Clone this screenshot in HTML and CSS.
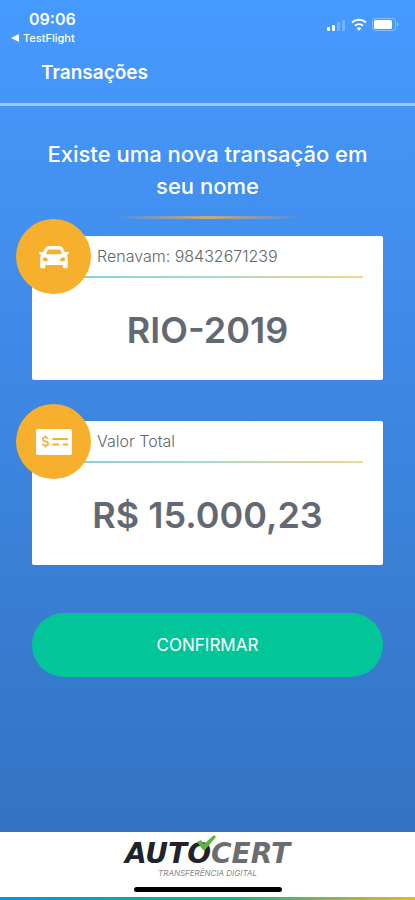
FILE: index.html
```html
<!DOCTYPE html>
<html lang="pt-BR">
<head>
    <meta charset="UTF-8">
    <meta name="viewport" content="width=device-width, initial-scale=1.0">
    <title>Transações</title>
    <link rel="stylesheet" href="styles.css">
</head>
<body>
    <header class="header">
        <div class="status-bar">
            <div class="status-left">
                <span class="time">09:06</span>
                <a class="back-link" href="#"><svg width="8" height="8" viewBox="0 0 8 8" aria-hidden="true"><path d="M8 0v8L0 4z" fill="#fff"/></svg>TestFlight</a>
            </div>
            <svg class="status-icons" width="72" height="16" viewBox="0 0 72 16" fill="#fff" aria-hidden="true">
                <rect x="0" y="11" width="3" height="4" rx="1"/>
                <rect x="5" y="9" width="3" height="6" rx="1"/>
                <rect x="10" y="6" width="3" height="9" rx="1" opacity=".25"/>
                <rect x="15" y="4" width="3" height="11" rx="1" opacity=".25"/>
                <g fill="none" stroke="#fff" stroke-width="2">
                    <path d="M25 6.500a10.500 10.500 0 0 1 14 0"/>
                    <path d="M28 9.800a6 6 0 0 1 8 0"/>
                </g>
                <path d="M32 14.800l-2.400-2.600a3.600 3.600 0 0 1 4.800 0z"/>
                <rect x="45.500" y="2.500" width="23" height="12" rx="3" fill="none" stroke="#fff" opacity=".35"/>
                <rect x="47" y="4" width="18" height="9" rx="1.500"/>
                <path d="M70 6.500c2 .6 2 3.400 0 4z" opacity=".4"/>
            </svg>
        </div>
        <h1>Transações</h1>
    </header>

    <main class="content">
        <h2>Existe uma nova transação em seu nome</h2>
        <div class="title-line"></div>

        <section class="card">
            <div class="card-icon">
                <svg width="30" height="24" viewBox="0 0 30 24" aria-hidden="true">
                    <path fill="#fff" fill-rule="evenodd" d="M10 1h10c2 0 3.500 1 4.200 2.800L25.700 7H29c1 0 1.200.8.700 1.500l-.7.900c-.3.400-.8.600-1.300.6.700.9 1.100 2 1.100 3.200V22c0 .8-.5 1.300-1.300 1.300h-2.400c-.8 0-1.300-.5-1.300-1.300v-2H6.200v2c0 .8-.5 1.300-1.300 1.300H2.500c-.8 0-1.300-.5-1.300-1.300v-8.800c0-1.200.4-2.300 1.100-3.200-.5 0-1-.2-1.300-.6l-.7-.9C-.2 7.800 0 7 1 7h3.300l1.500-3.200C6.500 2 8 1 10 1zM10 4.500c-.7 0-1.200.3-1.500 1L7 9.300h16l-1.500-3.800c-.3-.7-.8-1-1.500-1zM6 12.200c-1.300 0-2.200.8-2.200 2s.9 2 2.200 2c1 0 3 .3 3-.6 0-1-1.400-3.400-3-3.400zM24 12.200c1.300 0 2.200.8 2.200 2s-.9 2-2.200 2c-1 0-3 .3-3-.6 0-1 1.400-3.400 3-3.400z"/>
                </svg>
            </div>
            <p class="card-label">Renavam: 98432671239</p>
            <p class="card-value">RIO-2019</p>
        </section>

        <section class="card">
            <div class="card-icon">
                <svg width="36" height="26" viewBox="0 0 36 26" aria-hidden="true">
                    <rect width="36" height="26" rx="2" fill="#fff"/>
                    <g fill="none" stroke="#f7b02e" stroke-width="1.600">
                        <path d="M12 9.800C11.500 8.600 10.500 8.300 9.300 8.300 7.800 8.300 6.700 9 6.700 10.300c0 2.800 5.500 1.400 5.500 4.200 0 1.400-1.300 2.100-2.800 2.100-1.400 0-2.500-.5-3-1.800M9.400 6.500v2M9.400 16.500v2"/>
                        <path d="M16.500 10H32M16.500 15.500H23M27 15.500h5" stroke-width="1.800"/>
                    </g>
                </svg>
            </div>
            <p class="card-label">Valor Total</p>
            <p class="card-value">R$ 15.000,23</p>
        </section>

        <button class="confirm-btn" type="button">CONFIRMAR</button>
    </main>

    <footer class="footer">
        <div class="logo">
            <span class="logo-auto">AUTO</span><span class="logo-cert">CERT</span>
            <svg class="logo-check" width="20" height="15" viewBox="0 0 20 15" aria-hidden="true"><path d="M0 7l4-2 3 4L17 0l2 2L8 15H6z" fill="#5cb540"/></svg>
        </div>
        <p class="tagline">TRANSFERÊNCIA DIGITAL</p>
        <div class="home-bar"></div>
    </footer>
</body>
</html>
```
FILE: styles.css
```css
* {
    box-sizing: border-box;
    font-family: Inter, sans-serif;
}
body {
    margin: 0;
    min-height: 100vh;
    display: flex;
    flex-direction: column;
    background: linear-gradient(#479aff, #3373c3 92%);
    color: #fff;
}
h1, h2, p {
    margin: 0;
}
.header {
    padding-top: 8px;
    border-bottom: 3px solid #a0cbff;
}
.status-bar {
    display: flex;
    justify-content: space-between;
    padding: 0 16px 0 11px;
}
.status-left {
    display: flex;
    flex-direction: column;
}
.time {
    padding-left: 18px;
    font-size: 16px;
    font-weight: 600;
    line-height: 22px;
}
.back-link {
    display: flex;
    align-items: center;
    gap: 4px;
    color: #fff;
    font-size: 11px;
    font-weight: 500;
    line-height: 16px;
    text-decoration: none;
}
.status-icons {
    margin-top: 8px;
}
h1 {
    padding: 15px 41px 18px;
    font-size: 19px;
    font-weight: 600;
    line-height: 24px;
}
.content {
    flex: 1;
    padding: 32px 32px 40px;
}
h2 {
    font-size: 22px;
    font-weight: 500;
    line-height: 32px;
    text-align: center;
}
.title-line {
    width: 190px;
    height: 3px;
    margin: 14px auto 17px;
    background: linear-gradient(to right, transparent, #c6a878, transparent);
}
.card {
    position: relative;
    height: 144px;
    margin-bottom: 41px;
    background: #fff;
    border-radius: 2px;
}
.card-icon {
    position: absolute;
    top: -17px;
    left: -16px;
    width: 75px;
    height: 75px;
    display: flex;
    align-items: center;
    justify-content: center;
    background: #f7b02e;
    border-radius: 50%;
}
.card-label {
    margin-right: 20px;
    padding-left: 65px;
    border-bottom: 2px solid;
    border-image: linear-gradient(to right, #7ccbe8, #a2dcc8, #f3d48e) 1;
    color: #63676c;
    font-size: 16px;
    font-weight: 300;
    line-height: 40px;
}
.card-value {
    color: #636972;
    font-size: 36px;
    font-weight: 600;
    line-height: 104px;
    text-align: center;
}
.confirm-btn {
    display: block;
    width: 100%;
    height: 64px;
    margin-top: 48px;
    background: #03c59a;
    border: none;
    border-radius: 32px;
    color: #fff;
    font-size: 17px;
    cursor: pointer;
}
.footer {
    display: flex;
    flex-direction: column;
    align-items: center;
    padding-top: 10px;
    background: #fff;
    border-bottom: 3px solid;
    border-image: linear-gradient(to right, #0c8ff0, #10b585 55%, #f0b22c) 1;
}
.logo {
    position: relative;
    display: flex;
    line-height: 24px;
}
.logo-auto, .logo-cert {
    font-size: 28px;
    font-family: "DejaVu Sans", sans-serif;
    font-style: italic;
    font-weight: 700;
}
.logo-auto {
    color: #20232b;
}
.logo-cert {
    color: #6b6d70;
}
.logo-check {
    position: absolute;
    top: -7px;
    left: 72px;
}
.tagline {
    margin-top: 2px;
    color: #888;
    font-size: 8px;
    font-style: italic;
    line-height: 10px;
}
.home-bar {
    width: 148px;
    height: 5px;
    margin: 9px 0 5px;
    background: #000;
    border-radius: 3px;
}
@media (min-width: 600px) {
    .content {
        width: 100%;
        max-width: 560px;
        margin: 0 auto;
    }
}
```
